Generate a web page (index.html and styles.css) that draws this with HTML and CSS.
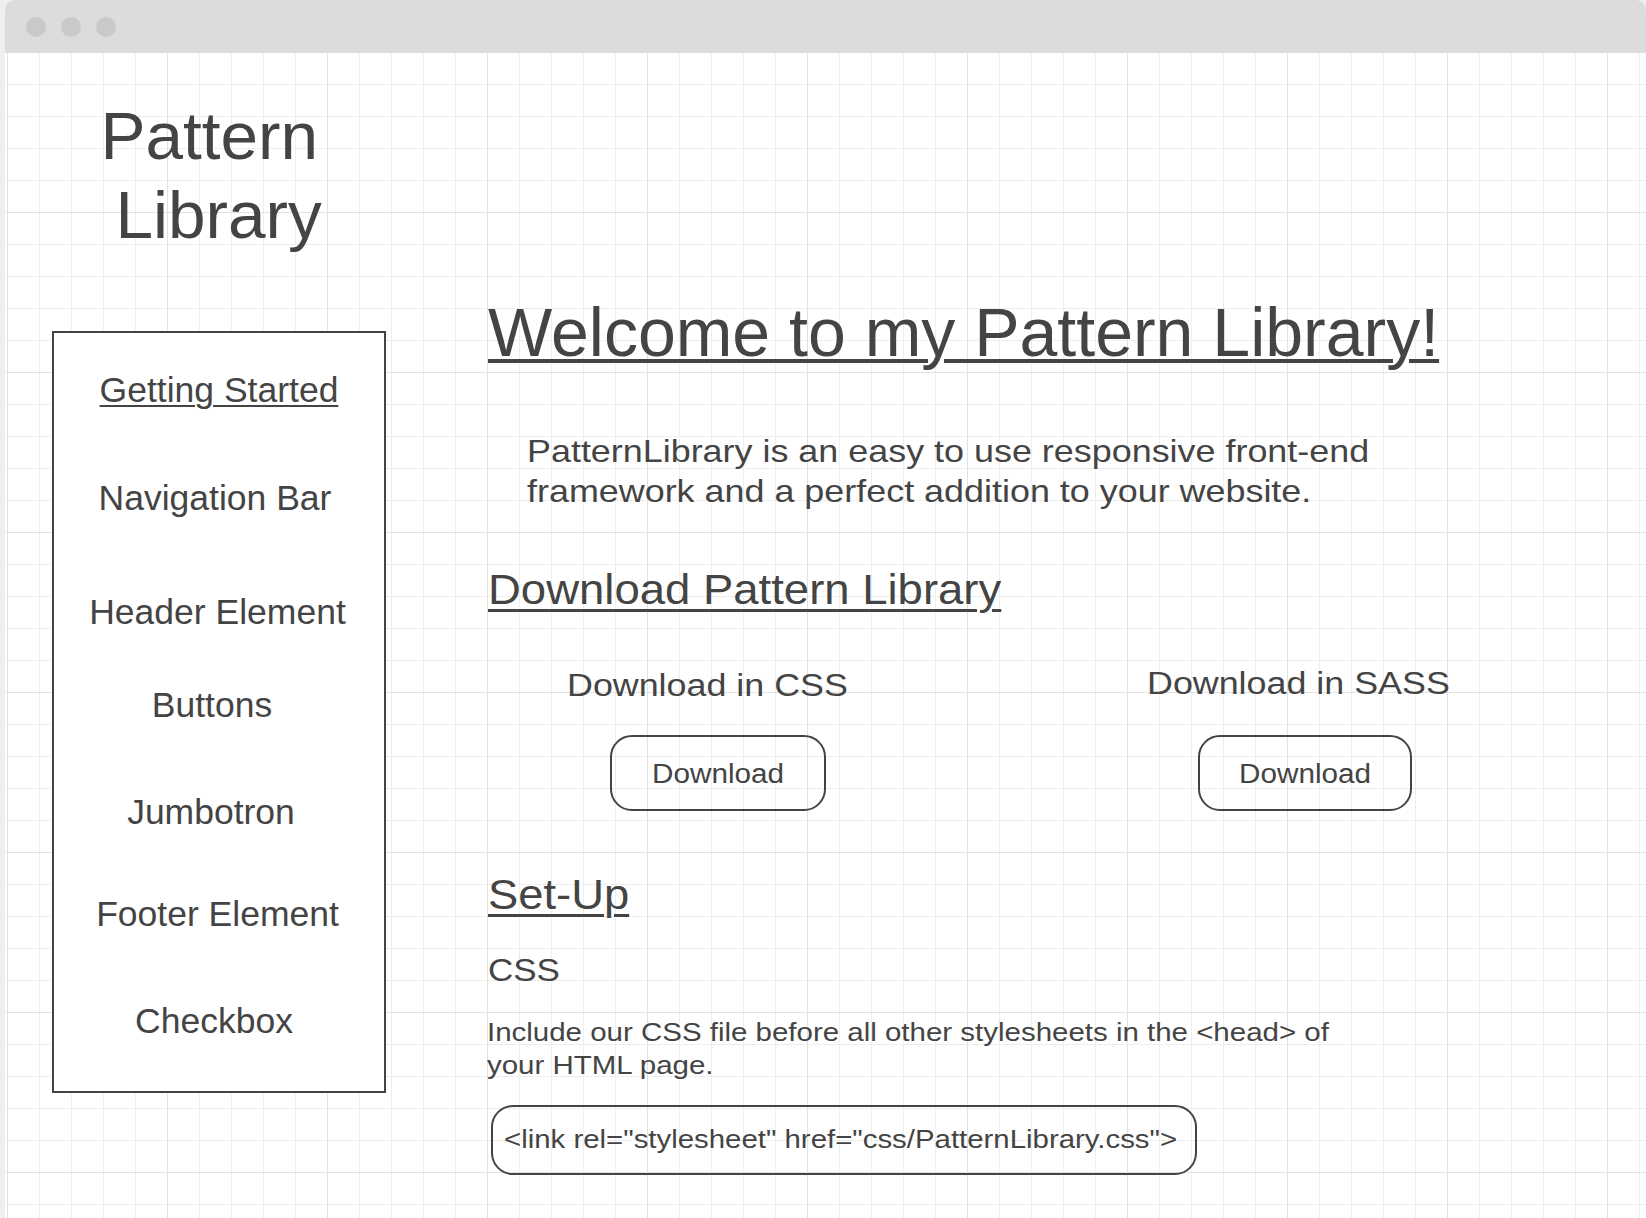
FILE: index.html
```html
<!DOCTYPE html>
<html lang="en">
<head>
<meta charset="utf-8">
<title>Pattern Library</title>
<link rel="stylesheet" href="styles.css">
</head>
<body>
<div class="window">
  <div class="titlebar">
    <span class="dot"></span>
    <span class="dot"></span>
    <span class="dot"></span>
  </div>
  <div class="canvas">
    <aside class="sidebar">
      <h1 class="brand"><span class="brand-line">Pattern</span><span class="brand-line brand-line--indent">Library</span></h1>
      <nav class="nav">
        <a class="nav-item nav-item--active">Getting Started</a>
        <a class="nav-item">Navigation Bar</a>
        <a class="nav-item">Header Element</a>
        <a class="nav-item">Buttons</a>
        <a class="nav-item">Jumbotron</a>
        <a class="nav-item">Footer Element</a>
        <a class="nav-item">Checkbox</a>
      </nav>
    </aside>
    <main class="main">
      <h2 class="page-title">Welcome to my Pattern Library!</h2>
      <p class="intro">PatternLibrary is an easy to use responsive front-end framework and a perfect addition to your website.</p>
      <h3 class="section-title">Download Pattern Library</h3>
      <div class="downloads">
        <div class="dl">
          <div class="dl-label">Download in CSS</div>
          <button class="btn"><span class="btn-text">Download</span></button>
        </div>
        <div class="dl dl--sass">
          <div class="dl-label">Download in SASS</div>
          <button class="btn"><span class="btn-text">Download</span></button>
        </div>
      </div>
      <h3 class="section-title section-title--setup">Set-Up</h3>
      <h4 class="sub">CSS</h4>
      <p class="note">Include our CSS file before all other stylesheets in the &lt;head&gt; of your HTML page.</p>
      <div class="code"><span class="code-text">&lt;link rel="stylesheet" href="css/PatternLibrary.css"&gt;</span></div>
    </main>
  </div>
</div>
</body>
</html>
```

FILE: styles.css
```css
html, body {
  margin: 0;
  padding: 0;
}

body {
  background: #efefef;
  font-family: "Liberation Sans", Arial, sans-serif;
  color: #444444;
}

.window {
  margin-left: 5px;
  min-height: 1218px;
  display: flex;
  flex-direction: column;
}

.titlebar {
  flex: none;
  height: 53px;
  background: #dcdcdc;
  border-radius: 10px 10px 0 0;
  display: flex;
  align-items: center;
  gap: 15px;
  padding-left: 21px;
}

.dot {
  width: 20px;
  height: 20px;
  border-radius: 50%;
  background: #c9c9c9;
}

.canvas {
  flex: 1;
  display: flex;
  overflow: hidden;
  background-color: #ffffff;
  background-image:
    linear-gradient(to right, #e2e2e2 1px, transparent 1px),
    linear-gradient(to bottom, #e2e2e2 1px, transparent 1px),
    linear-gradient(to right, #eeeeee 1px, transparent 1px),
    linear-gradient(to bottom, #eeeeee 1px, transparent 1px);
  background-size: 160px 160px, 160px 160px, 32px 32px, 32px 32px;
  background-position: 2px 0, 0 159px, 2px 0, 0 31px;
}

/* Sidebar */
.sidebar {
  flex: none;
  width: 481px;
  box-sizing: border-box;
  padding-left: 47px;
}

.brand {
  margin: 43px 0 0;
  font-size: 67.5px;
  line-height: 79px;
  font-weight: normal;
}

.brand-line {
  display: block;
  margin-left: 48.5px;
}

.brand-line--indent {
  margin-left: 63.5px;
}

.nav {
  margin-top: 77px;
  width: 334px;
  box-sizing: border-box;
  border: 2px solid #444444;
  background: #ffffff;
  padding: 37.4px 0 50px;
  display: flex;
  flex-direction: column;
}

.nav-item {
  display: block;
  font-size: 35.5px;
  line-height: 40px;
  text-align: center;
  color: #444444;
  text-decoration: none;
}

.nav-item--active {
  text-decoration: underline;
  text-decoration-thickness: 2px;
  text-underline-offset: 3px;
}

.nav-item:nth-child(2) { margin-top: 68px; padding-right: 8px; }
.nav-item:nth-child(3) { margin-top: 73.3px; padding-right: 3px; }
.nav-item:nth-child(4) { margin-top: 53.7px; padding-right: 14px; }
.nav-item:nth-child(5) { margin-top: 66.3px; padding-right: 16px; }
.nav-item:nth-child(6) { margin-top: 62px; padding-right: 3px; }
.nav-item:nth-child(7) { margin-top: 67.3px; padding-right: 10px; }

/* Main */
.main {
  flex: 1;
  min-width: 0;
  padding-top: 239.4px;
  padding-left: 2px;
}

.page-title {
  margin: 0;
  width: fit-content;
  font-size: 68px;
  line-height: 80px;
  font-weight: normal;
  text-decoration: underline;
  text-decoration-thickness: 3.5px;
  text-underline-offset: 2.5px;
}

.intro {
  margin: 58.3px 0 0 38.5px;
  width: 790px;
  font-size: 31.7px;
  line-height: 40px;
  transform: scaleX(1.133);
  transform-origin: left top;
}

.section-title {
  margin: 54.8px 0 0;
  width: fit-content;
  font-size: 42px;
  line-height: 50px;
  font-weight: normal;
  text-decoration: underline;
  text-decoration-thickness: 2.6px;
  text-underline-offset: 5px;
  transform: scaleX(1.083);
  transform-origin: left top;
}

.section-title--setup {
  margin-top: 59.5px;
  transform: scaleX(1.08);
}

.downloads {
  margin-top: 51px;
  padding-left: 78.5px;
  display: grid;
  grid-template-columns: 580px auto;
}

.dl {
  display: flex;
  flex-direction: column;
  align-items: flex-start;
}

.dl-label {
  font-size: 31px;
  line-height: 40px;
  white-space: nowrap;
  transform: scaleX(1.156);
  transform-origin: left top;
}

.dl--sass .dl-label {
  margin-top: -2px;
  margin-bottom: 2px;
}

.btn {
  margin: 28.4px 0 0 43.5px;
  width: 216px;
  height: 76px;
  box-sizing: border-box;
  padding: 3px 0 0;
  border: 2px solid #444444;
  border-radius: 22px;
  background: transparent;
  font-family: inherit;
  color: #444444;
  font-size: 27px;
  line-height: 30px;
}

.btn-text {
  display: inline-block;
  transform: scaleX(1.1);
}

.dl--sass .btn {
  margin-left: 51.5px;
  width: 214px;
}

.sub {
  margin: 30.4px 0 0;
  width: fit-content;
  font-size: 31.3px;
  line-height: 40px;
  font-weight: normal;
  transform: scaleX(1.117);
  transform-origin: left top;
}

.note {
  margin: 25.2px 0 0 -1px;
  width: 765px;
  font-size: 25.7px;
  line-height: 33.3px;
  transform: scaleX(1.147);
  transform-origin: left top;
}

.code {
  margin: 22.3px 0 0 3px;
  width: 706px;
  height: 70px;
  box-sizing: border-box;
  border: 2px solid #444444;
  border-radius: 22px;
  padding: 17.3px 0 0 11px;
  font-size: 26px;
  line-height: 30px;
  white-space: nowrap;
}

.code-text {
  display: inline-block;
  transform: scaleX(1.13);
  transform-origin: left top;
}
```
